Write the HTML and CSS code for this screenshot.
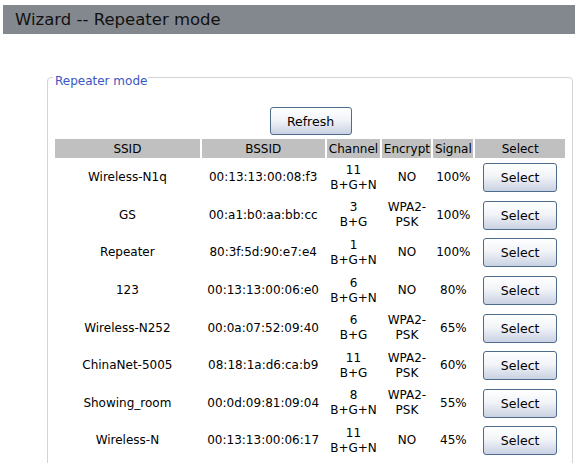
FILE: index.html
```html
<!DOCTYPE html>
<html>
<head>
<meta charset="utf-8">
<link rel="stylesheet" href="styles.css">
</head>
<body>
<div class="titlebar">Wizard -- Repeater mode</div>
<fieldset class="panel">
  <legend class="legend">Repeater mode</legend>
  <div class="toolbar"><button class="btn btn-refresh">Refresh</button></div>
  <table class="scan">
    <thead>
      <tr>
        <th class="c-ssid">SSID</th>
        <th class="c-bssid">BSSID</th>
        <th class="c-ch">Channel</th>
        <th class="c-enc">Encrypt</th>
        <th class="c-sig">Signal</th>
        <th class="c-sel">Select</th>
      </tr>
    </thead>
    <tbody>
      <tr><td>Wireless-N1q</td><td>00:13:13:00:08:f3</td><td>11<br>B+G+N</td><td>NO</td><td>100%</td><td><button class="btn btn-sel">Select</button></td></tr>
      <tr><td>GS</td><td>00:a1:b0:aa:bb:cc</td><td>3<br>B+G</td><td>WPA2-<br>PSK</td><td>100%</td><td><button class="btn btn-sel">Select</button></td></tr>
      <tr><td>Repeater</td><td>80:3f:5d:90:e7:e4</td><td>1<br>B+G+N</td><td>NO</td><td>100%</td><td><button class="btn btn-sel">Select</button></td></tr>
      <tr><td>123</td><td>00:13:13:00:06:e0</td><td>6<br>B+G+N</td><td>NO</td><td>80%</td><td><button class="btn btn-sel">Select</button></td></tr>
      <tr><td>Wireless-N252</td><td>00:0a:07:52:09:40</td><td>6<br>B+G</td><td>WPA2-<br>PSK</td><td>65%</td><td><button class="btn btn-sel">Select</button></td></tr>
      <tr><td>ChinaNet-5005</td><td>08:18:1a:d6:ca:b9</td><td>11<br>B+G</td><td>WPA2-<br>PSK</td><td>60%</td><td><button class="btn btn-sel">Select</button></td></tr>
      <tr><td>Showing_room</td><td>00:0d:09:81:09:04</td><td>8<br>B+G+N</td><td>WPA2-<br>PSK</td><td>55%</td><td><button class="btn btn-sel">Select</button></td></tr>
      <tr><td>Wireless-N</td><td>00:13:13:00:06:17</td><td>11<br>B+G+N</td><td>NO</td><td>45%</td><td><button class="btn btn-sel">Select</button></td></tr>
    </tbody>
  </table>
</fieldset>
</body>
</html>
```
FILE: styles.css
```css
html, body {
  margin: 0;
  padding: 0;
  background: #ffffff;
  font-family: "DejaVu Sans", Verdana, sans-serif;
  color: #000;
  overflow: hidden;
}
body {
  padding: 5px 0 0 3px;
}
.titlebar {
  height: 29px;
  line-height: 30px;
  background: #83888f;
  color: #111;
  font-size: 16.5px;
  padding-left: 12px;
}
.panel {
  margin: 32px 0 0 44px;
  width: 526px;
  box-sizing: border-box;
  border: 1px solid #d4d4d4;
  border-radius: 4px 4px 0 0;
  padding: 0 4px 10px 5px;
}
.legend {
  color: #3a55c4;
  font-size: 12px;
  line-height: 14px;
  padding: 8px 1px 0 2px;
  margin-left: 0;
}
.toolbar {
  display: flex;
  justify-content: center;
  padding-top: 19px;
}
.btn {
  font-family: "DejaVu Sans", Verdana, sans-serif;
  font-size: 12.5px;
  color: #000;
  border: 1px solid #4d6b8c;
  border-radius: 3px;
  background: linear-gradient(#ffffff 0%, #f2f4f8 45%, #c9d1e2 100%);
  padding: 0;
  cursor: pointer;
}
.btn-refresh {
  width: 82px;
  height: 28px;
}
.scan {
  border-collapse: separate;
  border-spacing: 2px;
  font-size: 12px;
  margin-top: 2px;
  width: 514px;
}
.scan th {
  background: #c0c0c0;
  font-weight: normal;
  height: 19px;
  padding: 0;
}
.scan td {
  text-align: center;
  height: 35.6px;
  padding: 0;
  line-height: 15px;
}
.c-ssid { width: 146px; }
.c-bssid { width: 123px; }
.c-ch { width: 54px; }
.c-enc { width: 49px; }
.c-sig { width: 40px; }
.c-sel { width: 90px; }
.btn-sel {
  width: 74px;
  height: 29px;
}
```
